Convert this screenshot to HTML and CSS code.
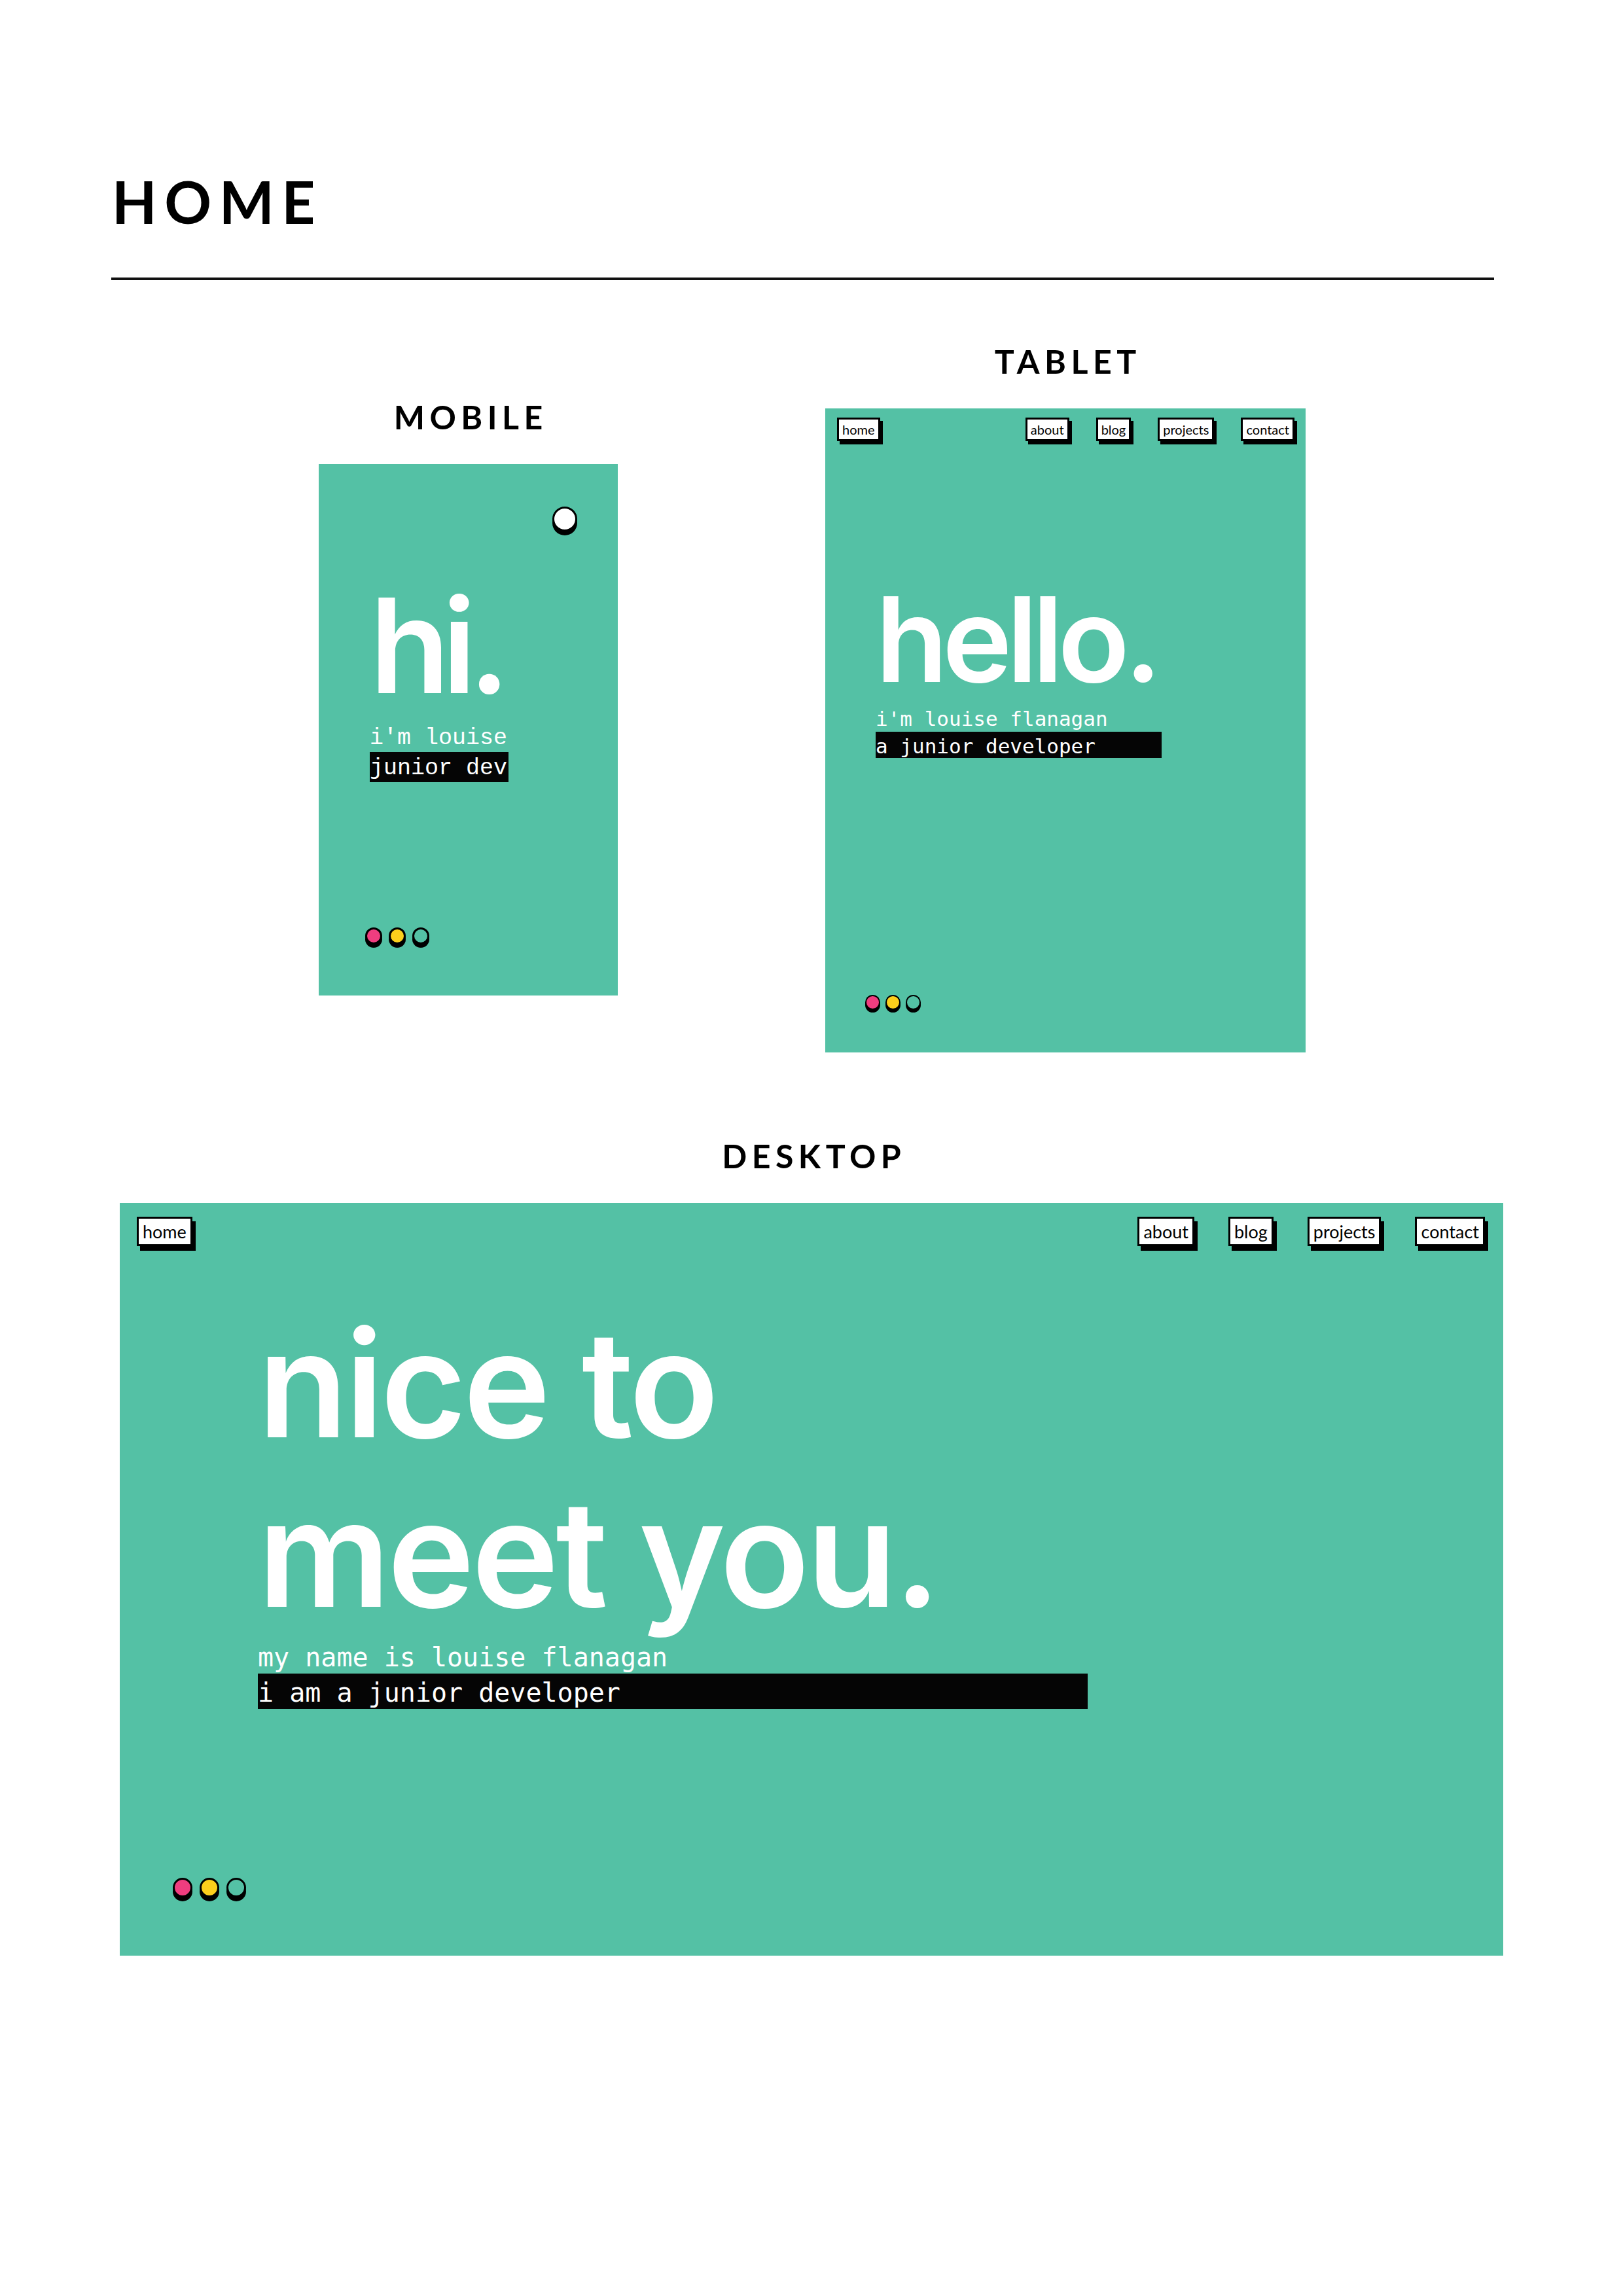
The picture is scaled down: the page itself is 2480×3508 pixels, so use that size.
FILE: index.html
```html
<!DOCTYPE html>
<html lang="en">
<head>
    <meta charset="UTF-8">
    <meta name="viewport" content="width=device-width, initial-scale=1.0">
    <title>Home - responsive mockups</title>
    <link rel="stylesheet" href="styles.css">
</head>
<body>
    <div class="page">
        <h1 class="page-title">HOME</h1>
        <hr class="divider">

        <div class="devices">
            <!-- mobile -->
            <section class="device device-mobile">
                <h2 class="device-label">MOBILE</h2>
                <div class="screen screen-mobile">
                    <div class="topbar"><span class="menu-dot"></span></div>
                    <div class="intro">
                        <h3 class="greeting">hi.</h3>
                        <p class="name">i'm louise</p>
                        <p class="role">junior dev</p>
                    </div>
                    <div class="dots">
                        <span class="dot dot-pink"></span>
                        <span class="dot dot-yellow"></span>
                        <span class="dot dot-teal"></span>
                    </div>
                </div>
            </section>

            <!-- tablet -->
            <section class="device device-tablet">
                <h2 class="device-label">TABLET</h2>
                <div class="screen screen-tablet">
                    <nav class="nav">
                        <a class="nav-btn">home</a>
                        <div class="nav-links">
                            <a class="nav-btn">about</a>
                            <a class="nav-btn">blog</a>
                            <a class="nav-btn">projects</a>
                            <a class="nav-btn">contact</a>
                        </div>
                    </nav>
                    <div class="intro">
                        <h3 class="greeting">hello.</h3>
                        <p class="name">i'm louise flanagan</p>
                        <p class="role">a junior developer</p>
                    </div>
                    <div class="dots">
                        <span class="dot dot-pink"></span>
                        <span class="dot dot-yellow"></span>
                        <span class="dot dot-teal"></span>
                    </div>
                </div>
            </section>
        </div>

        <!-- desktop -->
        <section class="device device-desktop">
            <h2 class="device-label">DESKTOP</h2>
            <div class="screen screen-desktop">
                <nav class="nav">
                    <a class="nav-btn">home</a>
                    <div class="nav-links">
                        <a class="nav-btn">about</a>
                        <a class="nav-btn">blog</a>
                        <a class="nav-btn">projects</a>
                        <a class="nav-btn">contact</a>
                    </div>
                </nav>
                <div class="intro">
                    <h3 class="greeting">nice to<br>meet you.</h3>
                    <p class="name">my name is louise flanagan</p>
                    <p class="role">i am a junior developer</p>
                </div>
                <div class="dots">
                    <span class="dot dot-pink"></span>
                    <span class="dot dot-yellow"></span>
                    <span class="dot dot-teal"></span>
                </div>
            </div>
        </section>
    </div>
</body>
</html>
```

FILE: styles.css
```css
body { margin: 0; background: #fff; font-family: "Lato", "Liberation Sans", sans-serif; color: #000; }
.page { width: 2480px; height: 3508px; overflow: hidden; }
.page-title { margin: 0; padding: 263px 0 0 171px; font-size: 89px; line-height: 1; font-weight: 700; letter-spacing: 0.13em; }
.divider { margin: 72px 0 0 170px; width: 2113px; height: 4px; border: none; background: #111; }

.devices { display: flex; align-items: flex-start; margin-top: 99px; }
.device-mobile { margin: 85px 0 0 487px; width: 457px; }
.device-tablet { margin-left: 317px; width: 734px; }
.device-desktop { margin: 133px 0 0 183px; width: 2114px; }
.device-label { margin: 0 0 47px; padding-left: 0.15em; font-size: 50px; line-height: 1; font-weight: 700; letter-spacing: 0.15em; text-align: center; }

/* screens */
.screen { display: flex; flex-direction: column; box-sizing: border-box; background: #54c1a5; }
.screen-mobile { height: 812px; padding: 65px 62px 78px 71px; }
.screen-tablet { height: 984px; padding: 14px 17px 65px 18px; }
.screen-desktop { height: 1150px; padding: 21px 28px 89px 26px; }

.topbar { display: flex; justify-content: flex-end; }
.menu-dot { display: block; width: 38px; height: 38px; box-sizing: border-box; border: 3px solid #000; border-radius: 50%; background: #fff; box-shadow: 0 6px 0 #000; }

/* nav buttons */
.nav { display: flex; align-items: flex-start; }
.nav-links { display: flex; margin-left: auto; }
.nav-btn { display: flex; align-items: center; box-sizing: border-box; background: #fff; border: 3px solid #000; color: #000; text-decoration: none; font-family: "Lato", sans-serif; }
.screen-tablet .nav-links { gap: 41px; }
.screen-tablet .nav-btn { height: 36px; padding: 0 5px; font-size: 20px; box-shadow: 4px 5px 0 #000; }
.screen-desktop .nav-links { gap: 52px; }
.screen-desktop .nav-btn { height: 45px; padding: 0 6px; font-size: 27px; box-shadow: 5px 7px 0 #000; }

/* intro text */
.greeting { margin: 0; font-family: "Inter", "Liberation Sans", sans-serif; font-weight: 600; color: #fff; }
.name { margin: 0; color: #fff; white-space: nowrap; }
.role { margin: 0; background: #050505; color: #fff; white-space: nowrap; }

.screen-mobile .intro { margin: 74px 0 0 7px; }
.screen-mobile .greeting { font-size: 200px; line-height: 200px; letter-spacing: -0.06em; }
.screen-mobile .name, .screen-mobile .role { font-family: "Liberation Mono", monospace; font-size: 35px; }
.screen-mobile .name { margin-top: 22px; line-height: 40px; }
.screen-mobile .role { margin-top: 1px; padding-top: 4px; line-height: 42px; width: 212px; }

.screen-tablet .intro { margin: 213px 0 0 59px; }
.screen-tablet .greeting { font-size: 180px; line-height: 180px; letter-spacing: -0.045em; }
.screen-tablet .name, .screen-tablet .role { font-family: "DejaVu Sans Mono", monospace; font-size: 31px; }
.screen-tablet .name { margin-top: 14px; line-height: 34px; }
.screen-tablet .role { margin-top: 3px; padding-top: 4px; line-height: 36px; width: 437px; }

.screen-desktop .intro { margin: 81px 0 0 185px; }
.screen-desktop .greeting { font-size: 225px; line-height: 259px; letter-spacing: -0.02em; }
.screen-desktop .name, .screen-desktop .role { font-family: "DejaVu Sans Mono", monospace; font-size: 40px; }
.screen-desktop .name { margin-top: 8px; line-height: 42px; }
.screen-desktop .role { margin-top: 4px; padding-top: 4px; line-height: 50px; width: 1268px; }

/* dots */
.dots { display: flex; margin-top: auto; }
.dot { display: block; box-sizing: border-box; border: 3px solid #000; border-radius: 50%; }
.dot-pink { background: #ef3d7f; }
.dot-yellow { background: #fccf1c; }
.dot-teal { background: #54c1a5; }
.screen-mobile .dots { gap: 10px; }
.screen-mobile .dot { width: 26px; height: 26px; box-shadow: 0 5px 0 #000; }
.screen-tablet .dots { margin-left: 43px; gap: 8px; }
.screen-tablet .dot { width: 23px; height: 23px; border-width: 2px; box-shadow: 0 4px 0 #000; }
.screen-desktop .dots { margin-left: 55px; gap: 11px; }
.screen-desktop .dot { width: 30px; height: 30px; box-shadow: 0 6px 0 #000; }
```
